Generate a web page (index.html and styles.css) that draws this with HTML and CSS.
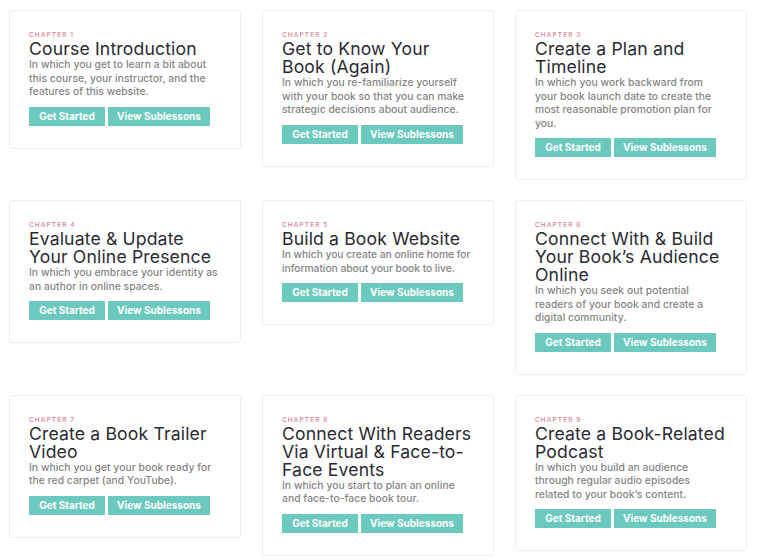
FILE: index.html
```html
<!DOCTYPE html>
<html lang="en">
<head>
<meta charset="utf-8">
<title>Chapters</title>
<link rel="stylesheet" href="styles.css">
</head>
<body>
<div class="grid">
  <div class="card">
    <div class="label">Chapter 1</div>
    <h2 class="title">Course Introduction</h2>
    <p class="desc">In which you get to learn a bit about this course, your instructor, and the features of this website.</p>
    <div class="actions"><a class="btn btn-start">Get Started</a><a class="btn btn-sub">View Sublessons</a></div>
  </div>
  <div class="card">
    <div class="label">Chapter 2</div>
    <h2 class="title">Get to Know Your Book (Again)</h2>
    <p class="desc">In which you re-familiarize yourself with your book so that you can make strategic decisions about audience.</p>
    <div class="actions"><a class="btn btn-start">Get Started</a><a class="btn btn-sub">View Sublessons</a></div>
  </div>
  <div class="card">
    <div class="label">Chapter 3</div>
    <h2 class="title">Create a Plan and Timeline</h2>
    <p class="desc">In which you work backward from your book launch date to create the most reasonable promotion plan for you.</p>
    <div class="actions"><a class="btn btn-start">Get Started</a><a class="btn btn-sub">View Sublessons</a></div>
  </div>
  <div class="card">
    <div class="label">Chapter 4</div>
    <h2 class="title">Evaluate &amp; Update Your Online Presence</h2>
    <p class="desc">In which you embrace your identity as an author in online spaces.</p>
    <div class="actions"><a class="btn btn-start">Get Started</a><a class="btn btn-sub">View Sublessons</a></div>
  </div>
  <div class="card">
    <div class="label">Chapter 5</div>
    <h2 class="title">Build a Book Website</h2>
    <p class="desc desc-tight">In which you create an online home for information about your book to live.</p>
    <div class="actions"><a class="btn btn-start">Get Started</a><a class="btn btn-sub">View Sublessons</a></div>
  </div>
  <div class="card">
    <div class="label">Chapter 6</div>
    <h2 class="title">Connect With &amp; Build Your Book’s Audience Online</h2>
    <p class="desc">In which you seek out potential readers of your book and create a digital community.</p>
    <div class="actions"><a class="btn btn-start">Get Started</a><a class="btn btn-sub">View Sublessons</a></div>
  </div>
  <div class="card">
    <div class="label">Chapter 7</div>
    <h2 class="title">Create a Book Trailer Video</h2>
    <p class="desc">In which you get your book ready for the red carpet (and YouTube).</p>
    <div class="actions"><a class="btn btn-start">Get Started</a><a class="btn btn-sub">View Sublessons</a></div>
  </div>
  <div class="card">
    <div class="label">Chapter 8</div>
    <h2 class="title">Connect With Readers Via Virtual &amp; Face-to-Face Events</h2>
    <p class="desc">In which you start to plan an online and face-to-face book tour.</p>
    <div class="actions"><a class="btn btn-start">Get Started</a><a class="btn btn-sub">View Sublessons</a></div>
  </div>
  <div class="card">
    <div class="label">Chapter 9</div>
    <h2 class="title">Create a Book-Related Podcast</h2>
    <p class="desc">In which you build an audience through regular audio episodes related to your book’s content.</p>
    <div class="actions"><a class="btn btn-start">Get Started</a><a class="btn btn-sub">View Sublessons</a></div>
  </div>
</div>
</body>
</html>
```
FILE: styles.css
```css
html, body {
  margin: 0;
  padding: 0;
  background: #ffffff;
}
body {
  font-family: Inter, "Open Sans", sans-serif;
  color: #2c2c34;
}
.grid {
  display: grid;
  grid-template-columns: repeat(3, 232px);
  column-gap: 21px;
  row-gap: 20px;
  align-items: start;
  padding: 10px 0 0 9px;
}
.card {
  border: 1px solid #eeeeee;
  border-radius: 3px;
  padding: 20px 19px 22px 19px;
  background: #fff;
}
.label {
  font-size: 6.5px;
  line-height: 9px;
  letter-spacing: 1.1px;
  text-transform: uppercase;
  color: #d5828f;
  font-weight: 500;
}
.title {
  margin: 0;
  font-size: 17.6px;
  line-height: 18px;
  letter-spacing: 0.15px;
  font-weight: 400;
  color: #2a2a32;
}
.desc {
  margin: 0;
  font-size: 10.3px;
  line-height: 13.5px;
  letter-spacing: 0.05px;
  color: #858585;
  font-weight: 500;
}
.desc-tight {
  letter-spacing: -0.05px;
}
.actions {
  display: flex;
  gap: 3px;
  margin-top: 8px;
}
.btn {
  display: block;
  height: 19px;
  line-height: 19px;
  background: #6cc9bd;
  color: #ffffff;
  font-size: 10px;
  font-weight: 700;
  text-align: center;
}
.btn-start { width: 76px; }
.btn-sub { width: 102px; }
```
